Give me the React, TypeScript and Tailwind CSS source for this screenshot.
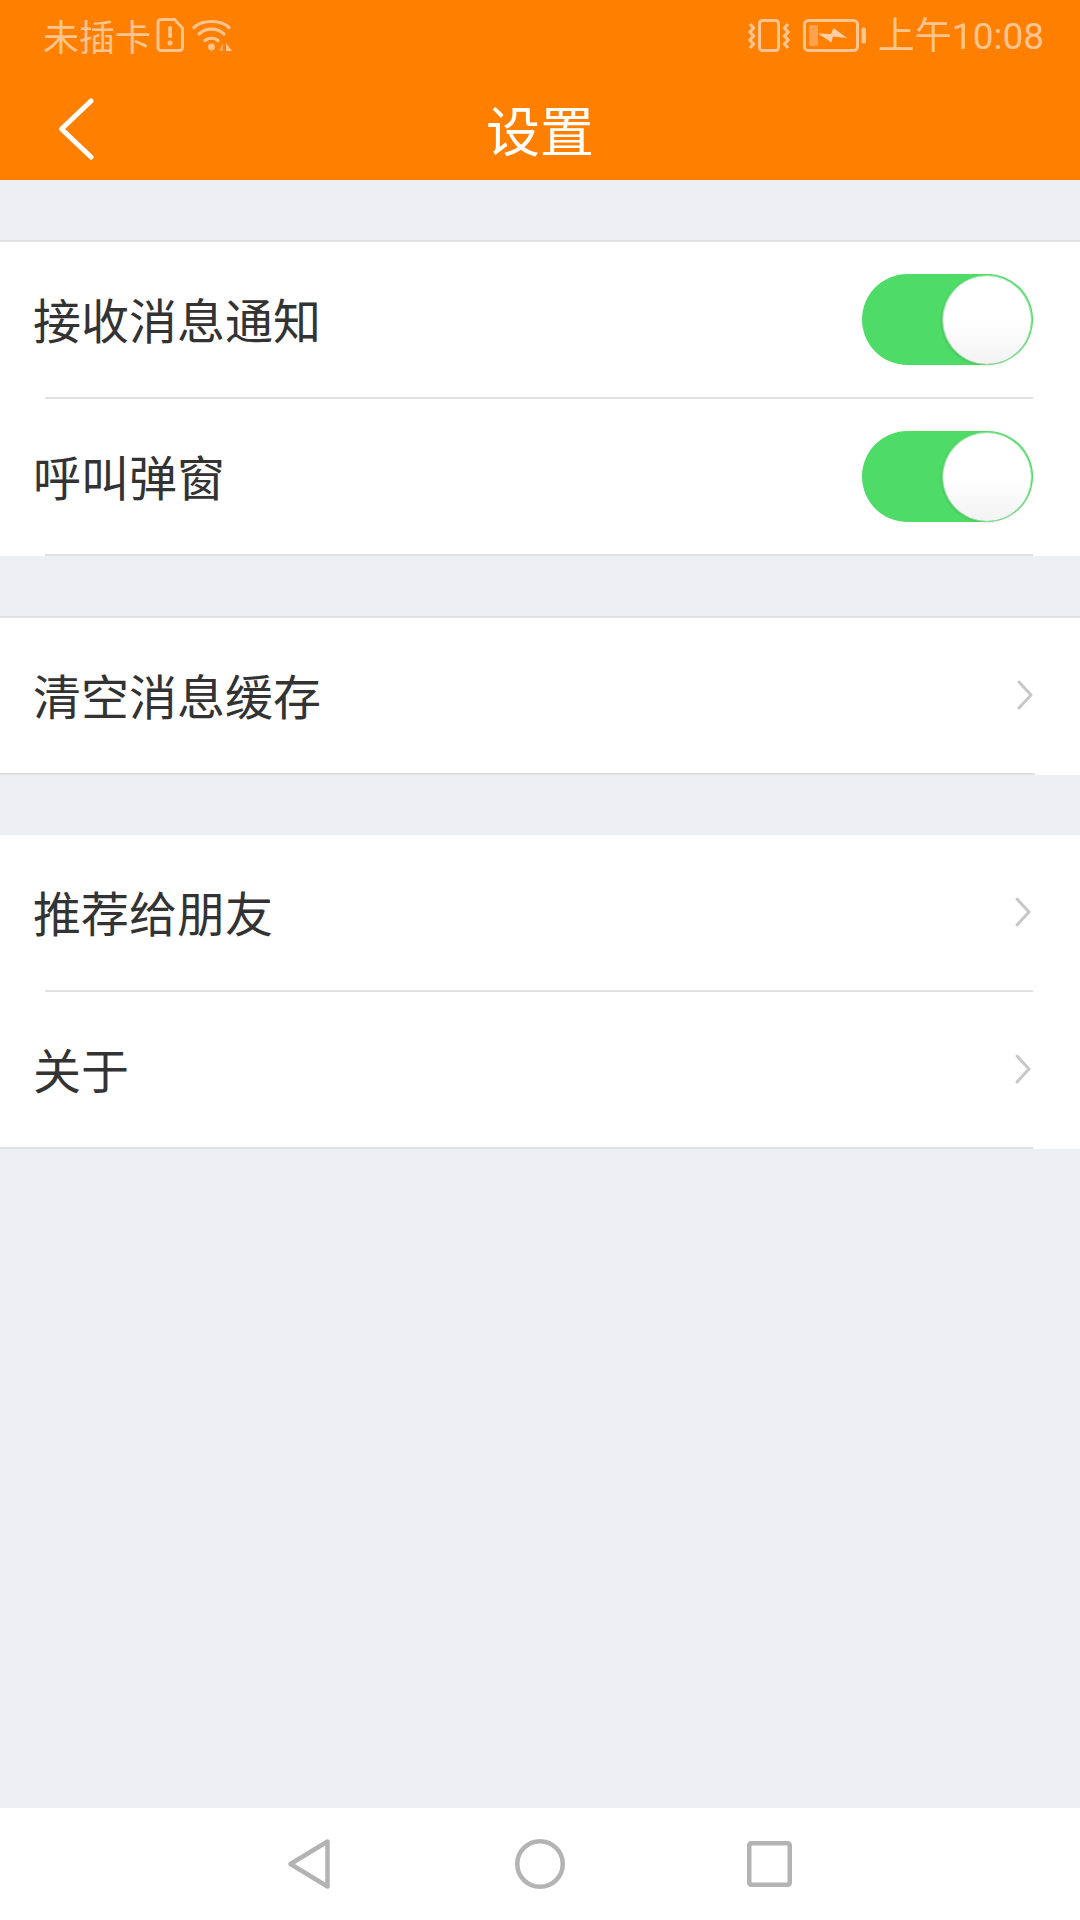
import React from 'react';

const cjk = "font-['Noto_Sans_CJK_SC','Noto_Sans',sans-serif]";

const SimIcon = () => (
  <svg width="28" height="34" viewBox="0 0 28 34" fill="none" className="shrink-0">
    <path d="M5 1.500h13.500L26.500 10v19.500a3 3 0 0 1-3 3H5a3 3 0 0 1-3-3v-25a3 3 0 0 1 3-3z" stroke="#ffc48f" strokeWidth="3" />
    <rect x="12.200" y="8" width="3.800" height="12" rx="1.500" fill="#ffc48f" />
    <circle cx="14" cy="25" r="2.500" fill="#ffc48f" />
  </svg>
);

const WifiIcon = () => (
  <svg width="41" height="33" viewBox="0 0 41 33" fill="none" className="shrink-0">
    <path d="M2 8.500C10 0.500 29 0.500 37 8.500" stroke="#ffc48f" strokeWidth="3.200" strokeLinecap="round" />
    <path d="M7 15C14 8.500 25 8.500 32 15" stroke="#ffc48f" strokeWidth="3.200" strokeLinecap="round" />
    <path d="M13 21.500C16 18.500 23 18.500 26 21.500" stroke="#ffc48f" strokeWidth="3.200" strokeLinecap="round" />
    <circle cx="19.500" cy="28" r="3.400" fill="#ffc48f" />
    <path d="M31 24v8h-4z" fill="#ffa452" />
    <path d="M34 24v8h6z" fill="#ffc48f" />
  </svg>
);

const VibrateIcon = () => (
  <svg width="42" height="33" viewBox="0 0 42 33" fill="none" className="shrink-0">
    <rect x="11.500" y="1.500" width="19" height="30" rx="3" stroke="#ffc48f" strokeWidth="3" />
    <path d="M2 5l3.500 4L2 13l3.500 4L2 21l3.500 4L2 29" stroke="#ffc48f" strokeWidth="3.200" />
    <path d="M40 5l-3.500 4 3.500 4-3.500 4 3.500 4-3.500 4 3.500 4" stroke="#ffc48f" strokeWidth="3.200" />
  </svg>
);

const BatteryIcon = () => (
  <svg width="64" height="33" viewBox="0 0 64 33" fill="none" className="shrink-0">
    <rect x="1.500" y="1.500" width="53" height="30" rx="4" stroke="#ffc48f" strokeWidth="3" />
    <rect x="6" y="6" width="9" height="21" rx="2" fill="#ffa24d" />
    <rect x="58.500" y="8.500" width="4.500" height="16" rx="1.500" fill="#ffc48f" />
    <path d="M15 14.500l13 .5 2.500-6L44 19l-14-1.500-1.500 6z" fill="#ffd0a6" />
  </svg>
);

const BackIcon = () => (
  <svg width="37" height="64" viewBox="0 0 37 64" fill="none">
    <path d="M34 4L4.500 32 34 60" stroke="#fff" strokeWidth="5" strokeLinecap="round" strokeLinejoin="round" />
  </svg>
);

const Chevron = () => (
  <svg width="16" height="30" viewBox="0 0 16 30" fill="none" className="mb-[2px] shrink-0">
    <path d="M2 2l12 13L2 28" stroke="#c8c8c8" strokeWidth="3" strokeLinecap="round" strokeLinejoin="round" />
  </svg>
);

const Toggle = () => (
  <div className="flex h-[91px] w-[171px] items-center justify-end rounded-full bg-[#4fdb67] pr-[2px]">
    <div className="h-[88px] w-[88px] rounded-full bg-gradient-to-b from-white from-50% to-[#f3f3f3] shadow-[0_0_0_1px_rgba(255,255,255,0.4),-1px_1px_3px_rgba(0,0,0,0.2)]" />
  </div>
);

const Line = ({ inset = false, right = 'mr-[47px]' }: { inset?: boolean; right?: string }) => (
  <div className={`h-[2px] bg-[#e0e0e0] ${inset ? 'ml-[45px]' : ''} ${right}`} />
);

const Row = ({ label, children }: { label: string; children: React.ReactNode }) => (
  <div className="flex h-[155px] items-center justify-between pl-[33px]">
    <span className={`${cjk} pb-[3px] text-[48px] leading-none text-[#333]`}>{label}</span>
    {children}
  </div>
);

const App = () => {
  return (
    <div className="flex h-[1920px] w-[1080px] flex-col overflow-hidden bg-[#eeeff3]">
      <header className="h-[180px] shrink-0 bg-[#ff7f00]">
        <div className={`flex h-[72px] items-center justify-between pb-[2px] pl-[43px] pr-[36px] ${cjk} text-[36px] leading-none text-[#ffc48f]`}>
          <div className="flex items-center">
            <span>未插卡</span>
            <span className="ml-[5px]"><SimIcon /></span>
            <span className="ml-[8px]"><WifiIcon /></span>
          </div>
          <div className="flex items-center">
            <VibrateIcon />
            <span className="ml-[13px]"><BatteryIcon /></span>
            <span className="ml-[11px] whitespace-nowrap text-[37px]">上午<span className="font-['Roboto',sans-serif]">10:08</span></span>
          </div>
        </div>
        <div className="grid h-[108px] grid-cols-[1fr_auto_1fr] items-center pl-[57px] pt-[5px]">
          <BackIcon />
          <span className={`${cjk} -ml-[57px] text-[54px] leading-none text-white`}>设置</span>
          <span />
        </div>
      </header>

      <section className="mt-[60px]">
        <Line right="" />
        <div className="bg-white">
          <Row label="接收消息通知">
            <div className="mr-[47px]"><Toggle /></div>
          </Row>
          <Line inset />
          <Row label="呼叫弹窗">
            <div className="mr-[47px]"><Toggle /></div>
          </Row>
          <Line inset />
        </div>
      </section>

      <section className="mt-[60px]">
        <Line right="" />
        <div className="bg-white">
          <Row label="清空消息缓存">
            <div className="mr-[47px]"><Chevron /></div>
          </Row>
          <Line right="mr-[45px]" />
        </div>
      </section>

      <section className="mt-[60px] bg-white">
        <Row label="推荐给朋友">
          <div className="mr-[49px]"><Chevron /></div>
        </Row>
        <Line inset />
        <Row label="关于">
          <div className="mr-[49px]"><Chevron /></div>
        </Row>
        <Line right="mr-[47px]" />
      </section>

      <div className="flex-1" />

      <nav className="flex h-[112px] shrink-0 items-center bg-white pl-[287px]">
        <svg width="44" height="52" viewBox="0 0 44 52" fill="none">
          <path d="M40.500 3.500L3.500 26l37 22.500z" stroke="#b3b3b3" strokeWidth="4.500" strokeLinejoin="round" />
        </svg>
        <svg width="50" height="50" viewBox="0 0 50 50" fill="none" className="ml-[184px]">
          <circle cx="25" cy="25" r="22.750" stroke="#b3b3b3" strokeWidth="4.500" />
        </svg>
        <svg width="45" height="46" viewBox="0 0 45 46" fill="none" className="ml-[182px]">
          <rect x="2.250" y="2.250" width="40.500" height="41.500" rx="2" stroke="#b3b3b3" strokeWidth="4.500" />
        </svg>
      </nav>
    </div>
  );
};

export default App;
